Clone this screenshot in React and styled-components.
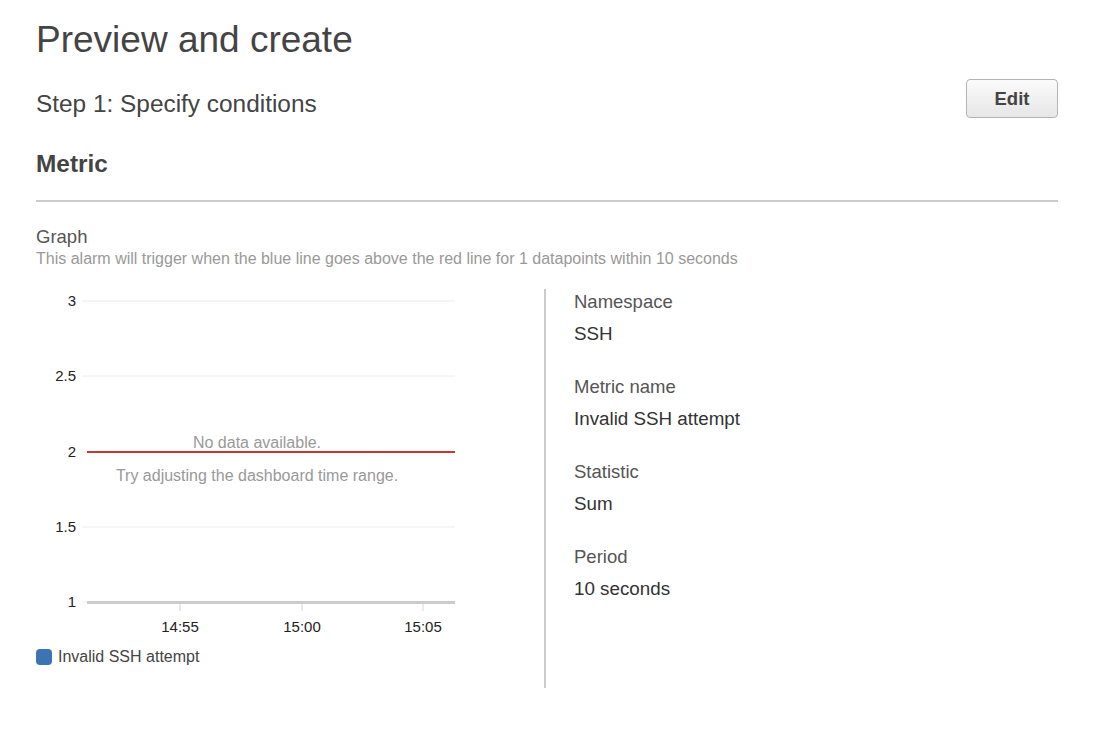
import React from "react";
import styled, { createGlobalStyle } from "styled-components";

const GlobalStyle = createGlobalStyle`
  html, body {
    margin: 0;
    padding: 0;
    background: #fff;
  }
  body {
    font-family: "Liberation Sans", Arial, sans-serif;
    color: #444;
  }
`;

const Page = styled.div`
  padding: 18px 40px 0 36px;
  width: 1022px;
`;

const Title = styled.h1`
  margin: 0;
  font-size: 37px;
  line-height: 44px;
  font-weight: 400;
  color: #444;
`;

const StepRow = styled.div`
  display: flex;
  justify-content: space-between;
  align-items: flex-end;
  margin-top: 17px;
  height: 39px;
`;

const StepTitle = styled.h2`
  margin: 0;
  font-size: 24.4px;
  line-height: 29px;
  font-weight: 400;
  color: #444;
`;

const EditButton = styled.button`
  width: 92px;
  height: 39px;
  border: 1px solid #b4b4b4;
  border-radius: 4px;
  background: linear-gradient(#fbfbfb, #e6e6e6);
  font-family: "Liberation Sans", Arial, sans-serif;
  font-size: 18.5px;
  font-weight: 700;
  color: #444;
  padding: 0;
  cursor: pointer;
`;

const SectionTitle = styled.h3`
  margin: 31px 0 0;
  font-size: 24.4px;
  line-height: 29px;
  font-weight: 700;
  color: #444;
`;

const Rule = styled.div`
  margin-top: 22px;
  height: 2px;
  background: #ccc;
`;

const Label = styled.div`
  font-size: ${(p) => (p.$value ? "18.8px" : "18.5px")};
  line-height: 24px;
  color: ${(p) => (p.$value ? "#333" : "#555")};
`;

const GraphLabel = styled(Label)`
  margin-top: 23px;
`;

const Hint = styled.div`
  font-size: 16px;
  line-height: 18px;
  margin-top: 1px;
  color: #999;
`;

const Body = styled.div`
  display: flex;
  margin-top: 21px;
`;

const ChartColumn = styled.div`
  width: 508px;
`;

const Divider = styled.div`
  width: 2px;
  height: 399px;
  background: #ccc;
`;

const Details = styled.div`
  padding-left: 28px;
  margin-top: 1px;
`;

const Field = styled.div`
  display: flex;
  flex-direction: column;
  gap: 8px;
  margin-bottom: 29px;
`;

const ChartBox = styled.div`
  position: relative;
  width: 440px;
  height: 354px;
`;

const Empty = styled.div`
  position: absolute;
  left: ${(p) => p.$x}px;
  top: ${(p) => p.$y}px;
  transform: translateX(-50%);
  white-space: nowrap;
  font-size: 16px;
  line-height: 18px;
  color: #999;
`;

const Legend = styled.div`
  display: flex;
  align-items: center;
  gap: 6px;
  margin-top: 5px;
  font-size: 16px;
  color: #444;
`;

const Swatch = styled.span`
  width: 16px;
  height: 16px;
  border-radius: 4px;
  background: #3b74b1;
`;

const yTicks = [
  { v: "3", y: 12 },
  { v: "2.5", y: 87 },
  { v: "2", y: 163 },
  { v: "1.5", y: 238 },
  { v: "1", y: 313 },
];

const xTicks = [
  { t: "14:55", x: 144 },
  { t: "15:00", x: 266 },
  { t: "15:05", x: 387 },
];

function Chart() {
  return (
    <ChartBox>
      <svg width="440" height="354" style={{ display: "block" }}>
        {yTicks.map((t) => (
          <g key={t.v}>
            <line x1="46" x2="419" y1={t.y} y2={t.y} stroke="#ececec" strokeWidth="1" />
            <text
              x="40"
              y={t.y + 5}
              textAnchor="end"
              fontSize="15"
              fill="#222"
              fontFamily="Liberation Sans, Arial, sans-serif"
            >
              {t.v}
            </text>
          </g>
        ))}
        <line x1="51" x2="419" y1="163" y2="163" stroke="#c9392b" strokeWidth="2" />
        <line x1="51" x2="419" y1="313.5" y2="313.5" stroke="#ccc" strokeWidth="3" />
        {xTicks.map((t) => (
          <g key={t.t}>
            <line x1={t.x} x2={t.x} y1="315" y2="322" stroke="#eaeaea" strokeWidth="2" />
            <text
              x={t.x}
              y="343"
              textAnchor="middle"
              fontSize="15"
              fill="#222"
              fontFamily="Liberation Sans, Arial, sans-serif"
            >
              {t.t}
            </text>
          </g>
        ))}
      </svg>
      <Empty $x={221} $y={145}>No data available.</Empty>
      <Empty $x={221} $y={178}>Try adjusting the dashboard time range.</Empty>
    </ChartBox>
  );
}

const fields = [
  ["Namespace", "SSH"],
  ["Metric name", "Invalid SSH attempt"],
  ["Statistic", "Sum"],
  ["Period", "10 seconds"],
];

export default function App() {
  return (
    <>
      <GlobalStyle />
      <Page>
        <Title>Preview and create</Title>
        <StepRow>
          <StepTitle>Step 1: Specify conditions</StepTitle>
          <EditButton>Edit</EditButton>
        </StepRow>
        <SectionTitle>Metric</SectionTitle>
        <Rule />
        <GraphLabel>Graph</GraphLabel>
        <Hint>
          This alarm will trigger when the blue line goes above the red line for 1 datapoints within 10 seconds
        </Hint>
        <Body>
          <ChartColumn>
            <Chart />
            <Legend>
              <Swatch />
              Invalid SSH attempt
            </Legend>
          </ChartColumn>
          <Divider />
          <Details>
            {fields.map(([k, v]) => (
              <Field key={k}>
                <Label>{k}</Label>
                <Label $value>{v}</Label>
              </Field>
            ))}
          </Details>
        </Body>
      </Page>
    </>
  );
}
